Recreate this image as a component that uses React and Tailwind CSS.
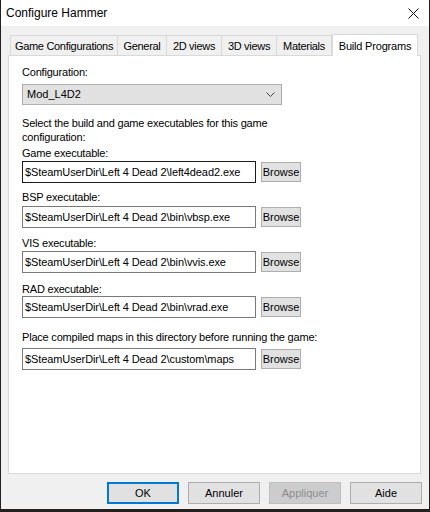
const font = { fontFamily: '"Liberation Sans", Arial, sans-serif' };

const Tab = ({ label, width, active }) => (
  <div
    className={
      active
        ? "h-[22px] bg-white border border-b-0 border-[#d9d9d9] -mb-px relative z-10 flex items-center justify-center pt-px text-[11px] tracking-[-0.2px] text-black"
        : "h-[20px] bg-[#f0f0f0] border border-b-0 border-[#d9d9d9] -ml-px flex items-center justify-center pt-px text-[11px] tracking-[-0.3px] text-black"
    }
    style={{ width }}
  >
    {label}
  </div>
);

const PathRow = ({ value, dark }) => (
  <div className="flex items-center">
    <div
      className={
        dark
          ? "w-[234px] h-[22px] border border-[#1a1a1a] bg-white flex items-center pl-[2px] text-[11px] tracking-[-0.1px] text-black whitespace-nowrap"
          : "w-[234px] h-[22px] border border-[#7a7a7a] bg-white flex items-center pl-[2px] text-[11px] tracking-[-0.1px] text-black whitespace-nowrap"
      }
    >
      {value}
    </div>
    <button className="ml-[5px] w-[40px] h-[20px] bg-[#e1e1e1] border border-[#adadad] text-[11px] text-black flex items-center justify-center">
      Browse
    </button>
  </div>
);

const Label = ({ children, className }) => (
  <div className={"h-[13px] leading-[13px] text-[11px] tracking-[-0.2px] text-black whitespace-nowrap " + className}>
    {children}
  </div>
);

export default function App() {
  return (
    <div className="w-[430px] h-[512px] bg-[#231f1f] overflow-hidden" style={font}>
      <div className="ml-px w-[428px] h-[509px] bg-[#f0f0f0] flex flex-col">
        {/* title bar */}
        <div className="h-[26px] bg-white flex items-center justify-between pl-[5px] pr-[10px]">
          <span className="text-[12px] text-black">Configure Hammer</span>
          <svg width="11" height="11" viewBox="0 0 11 11" className="mt-px">
            <path d="M0.5 0.5 L10.5 10.5 M10.5 0.5 L0.5 10.5" stroke="#111" strokeWidth="1" />
          </svg>
        </div>

        {/* tabs + panel */}
        <div className="px-[7px] pt-[7px]">
          <div className="h-[22px] flex items-end pl-[3px]">
            <Tab label="Game Configurations" width={108} />
            <Tab label="General" width={50} />
            <Tab label="2D views" width={56} />
            <Tab label="3D views" width={56} />
            <Tab label="Materials" width={56} />
            <Tab label="Build Programs" width={86} active />
          </div>
          <div className="h-[419px] w-[413px] bg-white border border-[#d9d9d9] pl-[13px] pt-[10px]">
            <Label>Configuration:</Label>
            <div className="mt-[5px] w-[260px] h-[21px] bg-[#e1e1e1] border border-[#adadad] flex items-center justify-between pl-[4px] pr-[6px] text-[11px] text-black">
              <span>Mod_L4D2</span>
              <svg width="9" height="5" viewBox="0 0 9 5">
                <path d="M0.5 0.5 L4.5 4.5 L8.5 0.5" fill="none" stroke="#444" strokeWidth="1" />
              </svg>
            </div>
            <div className="mt-[11px] w-[280px] text-[11px] leading-[14px] tracking-[-0.2px] text-black">
              Select the build and game executables for this game configuration:
            </div>
            <Label className="mt-[3px]">Game executable:</Label>
            <div className="mt-px">
              <PathRow value="$SteamUserDir\Left 4 Dead 2\left4dead2.exe" dark />
            </div>
            <Label className="mt-[8px]">BSP executable:</Label>
            <div className="mt-[2px]">
              <PathRow value="$SteamUserDir\Left 4 Dead 2\bin\vbsp.exe" />
            </div>
            <Label className="mt-[9px]">VIS executable:</Label>
            <div className="mt-px">
              <PathRow value="$SteamUserDir\Left 4 Dead 2\bin\vvis.exe" />
            </div>
            <Label className="mt-[10px]">RAD executable:</Label>
            <div>
              <PathRow value="$SteamUserDir\Left 4 Dead 2\bin\vrad.exe" />
            </div>
            <Label className="mt-[13px]">Place compiled maps in this directory before running the game:</Label>
            <div className="mt-[4px]">
              <PathRow value="$SteamUserDir\Left 4 Dead 2\custom\maps" />
            </div>
          </div>
        </div>

        {/* dialog buttons */}
        <div className="mt-[8px] flex justify-end gap-[9px] pr-[7px]">
          <button className="w-[72px] h-[22px] bg-[#e1e1e1] border-2 border-[#0078d7] text-[11px] text-black">OK</button>
          <button className="w-[72px] h-[22px] bg-[#e1e1e1] border border-[#adadad] text-[11px] text-black">Annuler</button>
          <button className="w-[72px] h-[22px] bg-[#cccccc] border border-[#bfbfbf] text-[11px] text-[#8c8c8c]">Appliquer</button>
          <button className="w-[72px] h-[22px] bg-[#e1e1e1] border border-[#adadad] text-[11px] text-black">Aide</button>
        </div>
      </div>
    </div>
  );
}
